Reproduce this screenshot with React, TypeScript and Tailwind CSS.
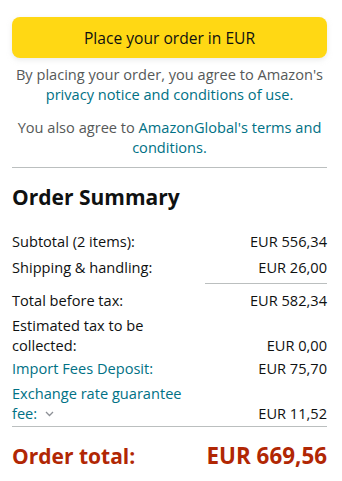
import React from 'react';

const rows = [
  { label: 'Subtotal (2 items):', value: 'EUR 556,34' },
  { label: 'Shipping & handling:', value: 'EUR 26,00' },
];

export default function App() {
  return (
    <div className="min-h-screen bg-white pl-3 pr-[15px] pt-[17px] text-[14.6px] leading-5 text-[#0F1111]" style={{ fontFamily: '"Open Sans", Arial, sans-serif' }}>
      {/* Place order */}
      <button className="h-[41px] w-full rounded-lg bg-[#FFD814] text-[15.6px] text-[#0F1111] shadow-[0_2px_5px_rgba(213,217,217,0.5)]">
        Place your order in EUR
      </button>

      <p className="mt-[6px] text-center text-[#565959]">
        By placing your order, you agree to Amazon's{' '}
        <span className="text-[#007185]">privacy notice and conditions of use.</span>
      </p>
      <p className="mt-[13px] text-center text-[#565959]">
        You also agree to <span className="text-[#007185]">AmazonGlobal's terms and conditions.</span>
      </p>

      <div className="mt-[10px] border-t border-[#BBBFBF]" />

      {/* Summary */}
      <h2 className="mt-[15px] text-[21px] font-bold leading-7">Order Summary</h2>

      <div className="mt-[20px] flex flex-col">
        {rows.map((r) => (
          <div key={r.label} className="mb-[6px] flex items-end justify-between">
            <span>{r.label}</span>
            <span>{r.value}</span>
          </div>
        ))}
        <div className="mb-[6px] ml-auto w-[122px] border-t border-[#BBBFBF]" />
        <div className="mb-[5px] flex items-end justify-between">
          <span>Total before tax:</span>
          <span>EUR 582,34</span>
        </div>
        <div className="mb-[3px] flex items-end justify-between">
          <span className="w-[155px]">Estimated tax to be collected:</span>
          <span>EUR 0,00</span>
        </div>
        <div className="mb-[5px] flex items-end justify-between">
          <span className="text-[#007185]">Import Fees Deposit:</span>
          <span>EUR 75,70</span>
        </div>
        <div className="flex items-end justify-between">
          <span className="w-[196px] text-[#007185]">
            Exchange rate guarantee fee:
            <svg className="ml-[8px] inline-block align-[2px]" width="9" height="6" viewBox="0 0 9 6" fill="none">
              <path d="M1 1l3.5 3.5L8 1" stroke="#8D9096" strokeWidth="1.3" />
            </svg>
          </span>
          <span>EUR 11,52</span>
        </div>
        <div className="mt-[3px] border-t border-[#BBBFBF]" />
        <div className="mt-[15px] flex items-center justify-between font-bold leading-7 text-[#B12704]">
          <span className="text-[21px]">Order total:</span>
          <span className="text-[22.4px]">EUR 669,56</span>
        </div>
      </div>
    </div>
  );
}
